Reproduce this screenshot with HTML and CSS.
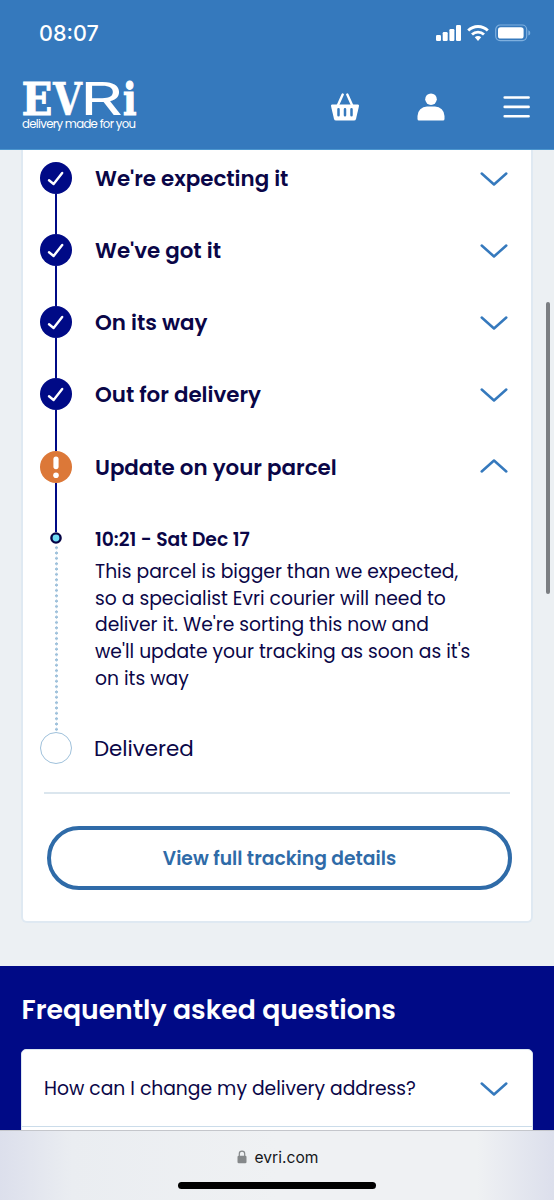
FILE: index.html
```html
<!DOCTYPE html>
<html lang="en">
<head>
<meta charset="utf-8">
<title>Evri tracking</title>
<link rel="stylesheet" href="styles.css">
</head>
<body>
<svg class="defs" width="0" height="0">
  <symbol id="chevron" viewBox="0 0 28 14"><path d="M1.7 1.500 14 12.500 26.300 1.500" fill="none" stroke="#3579bd" stroke-width="2.500" stroke-linecap="round" stroke-linejoin="round"/></symbol>
  <symbol id="check" viewBox="0 0 32 32"><circle cx="16" cy="16" r="16" fill="#000a86"/><path d="M9 18.300 13.600 22 22.200 11" fill="none" stroke="#fff" stroke-width="2.400" stroke-linecap="round" stroke-linejoin="round"/></symbol>
</svg>
<div class="screen">
  <header class="header">
    <div class="status">
      <span class="time">08:07</span>
      <svg class="status-icons" width="96" height="18" viewBox="0 0 96 18" fill="#fff">
        <rect x="0" y="11" width="5" height="6" rx="1.2"/><rect x="6.700" y="8" width="5" height="9" rx="1.2"/><rect x="13.400" y="5" width="5" height="12" rx="1.2"/><rect x="20" y="1" width="5" height="16" rx="1.2"/>
        <g fill="none" stroke="#fff" stroke-width="2.800"><path d="M32.200 6.600a13.800 13.800 0 0 1 19.600 0"/><path d="M36 10.600a8.600 8.600 0 0 1 12 0"/></g>
        <path d="M38.800 13.200a4.600 4.600 0 0 1 6.400 0L42 16.900z"/>
        <rect x="59.700" y="1" width="31" height="15.600" rx="4.500" fill="none" stroke="#7fb0df" stroke-width="1.200"/>
        <rect x="62" y="3.200" width="25.600" height="11.400" rx="2.600"/>
        <path d="M92.300 6.300q2 .6 2 2.600t-2 2.600z" fill="#7fb0df"/>
      </svg>
    </div>
    <div class="nav">
      <svg class="logo" width="120" height="68" viewBox="0 0 120 68" fill="#fff">
        <text class="logo-serif" x="-.2" y="48" textLength="30.500" lengthAdjust="spacingAndGlyphs">E</text>
        <text class="logo-serif logo-v" x="31" y="48" textLength="29" lengthAdjust="spacingAndGlyphs">V</text>
        <text class="logo-sans" x="58" y="48.300" textLength="43" lengthAdjust="spacingAndGlyphs">R</text>
        <text class="logo-serif" x="101" y="48" textLength="13.500" lengthAdjust="spacingAndGlyphs">i</text>
        <text class="logo-tag" x="0" y="60.500" textLength="114" lengthAdjust="spacing">delivery made for you</text>
      </svg>
      <svg class="basket" width="30" height="28" viewBox="0 0 30 28">
        <path d="M8 12 12.700 1.500M22 12 17.300 1.500" stroke="#fff" stroke-width="2.400" stroke-linecap="round"/>
        <path d="M2 11.500H28Q29.300 11.500 29 13L26 26Q25.600 27.500 24 27.500H6Q4.400 27.500 4 26L1 13Q.7 11.500 2 11.500Z" fill="#fff"/>
        <path d="M8.500 16.300V22.200M15 16.300V22.200M21.500 16.300V22.200" stroke="#3579bd" stroke-width="2.500" stroke-linecap="round"/>
      </svg>
      <svg class="person" width="28" height="28" viewBox="0 0 28 28" fill="#fff"><circle cx="14" cy="6.200" r="5.800"/><path d="M.5 26V23A9.500 9.500 0 0 1 10 13.500H18A9.500 9.500 0 0 1 27.500 23V26Q27.500 27.500 26 27.500H2Q.5 27.500.5 26Z"/></svg>
      <svg class="menu" width="28" height="24" viewBox="0 0 28 24"><path d="M1.700 2.500H25.600M1.700 11.900H25.600M1.700 21.300H25.600" stroke="#fff" stroke-width="2.600" stroke-linecap="round"/></svg>
    </div>
  </header>

  <main class="main">
    <section class="card">
      <div class="steps">
        <div class="step"><div class="rail"><svg class="mark"><use href="#check"/></svg><i class="line"></i></div><h2 class="title">We're expecting it</h2><svg class="chev"><use href="#chevron"/></svg></div>
        <div class="step"><div class="rail"><svg class="mark"><use href="#check"/></svg><i class="line"></i></div><h2 class="title">We've got it</h2><svg class="chev"><use href="#chevron"/></svg></div>
        <div class="step"><div class="rail"><svg class="mark"><use href="#check"/></svg><i class="line"></i></div><h2 class="title">On its way</h2><svg class="chev"><use href="#chevron"/></svg></div>
        <div class="step"><div class="rail"><svg class="mark"><use href="#check"/></svg><i class="line"></i></div><h2 class="title">Out for delivery</h2><svg class="chev"><use href="#chevron"/></svg></div>
        <div class="step step-alert"><div class="rail"><svg class="mark" viewBox="0 0 32 32"><circle cx="16" cy="16" r="16" fill="#dc7838"/><path d="M16 8.200V15.600" stroke="#fff" stroke-width="5.200" stroke-linecap="round"/><circle cx="16" cy="24.300" r="2.800" fill="#fff"/></svg><i class="line"></i></div><h2 class="title">Update on your parcel</h2><svg class="chev up"><use href="#chevron"/></svg></div>
        <div class="event">
          <div class="rail"><svg class="dot" viewBox="0 0 12 12"><circle cx="6" cy="6" r="4.600" fill="#6edcf5" stroke="#050345" stroke-width="2.400"/></svg><i class="dots"></i></div>
          <div class="event-body">
            <h3 class="when">10:21 - Sat Dec 17</h3>
            <p class="copy">This parcel is bigger than we expected,<br>so a specialist Evri courier will need to<br>deliver it. We're sorting this now and<br>we'll update your tracking as soon as it's<br>on its way</p>
          </div>
        </div>
        <div class="step step-last"><div class="rail"><i class="ring"></i></div><p class="title pending">Delivered</p></div>
      </div>
      <hr class="rule">
      <a class="button">View full tracking details</a>
    </section>
  </main>

  <section class="faq">
    <h2 class="faq-title">Frequently asked questions</h2>
    <div class="faq-card"><div class="question"><span>How can I change my delivery address?</span><svg class="chev"><use href="#chevron"/></svg></div></div>
  </section>

  <footer class="browser">
    <div class="address">
      <svg width="10" height="14" viewBox="0 0 10 14"><path d="M2.300 6.500V3.800a2.700 2.700 0 0 1 5.400 0V6.500" fill="none" stroke="#85888a" stroke-width="1.200"/><rect x=".5" y="5.800" width="9" height="7.400" rx="1.300" fill="#85888a"/></svg>
      <span class="host">evri.com</span>
    </div>
    <div class="home"></div>
  </footer>
  <div class="scroll"></div>
</div>
</body>
</html>
```
FILE: styles.css
```css
* { box-sizing: border-box; }
body { margin: 0; background: #ecf0f3; font-family: Poppins, Inter, sans-serif; color: #0a0647; }
h2, h3, p { margin: 0; }
.defs { display: block; }
.screen { position: relative; width: 554px; height: 1200px; overflow: hidden; display: flex; flex-direction: column; }
.header { height: 150px; flex: none; background: #3579bd; border-bottom: 1px solid #4c96cf; color: #fff; }
.status { height: 67px; padding: 0 22px 0 39px; display: flex; justify-content: space-between; align-items: center; }
.time { font-family: Inter, sans-serif; font-size: 21.500px; line-height: 26px; font-weight: 500; margin-top: -1px; }
.status-icons { width: 96px; margin-top: -1px; }
.nav { display: flex; height: 81px; padding-left: 22px; align-items: flex-start; }
.logo { overflow: visible; }
.logo-serif { font: bold 44px "DejaVu Serif", serif; stroke: #fff; stroke-width: 1.200px; }
.logo-v { stroke-width: .5px; }
.logo-sans { font: 400 45px Inter, sans-serif; }
.logo-tag { font: 400 11.700px Poppins, Inter, sans-serif; }
.basket { margin: 26px 0 0 188px; }
.person { margin: 26px 0 0 57px; }
.menu { margin: 28px 0 0 58px; }
.main { height: 816px; flex: none; padding: 0 21px; }
.card { height: 773px; padding: 11.500px 19px 0 17px; border: 2px solid #dfe9f2; border-top: 0; border-radius: 0 0 6px 6px; background: #fff; }
.step { display: flex; height: 72.250px; }
.rail { display: flex; flex-direction: column; align-items: center; width: 32px; margin-right: 23px; }
.mark { width: 32px; height: 32px; flex: none; }
.line { width: 2.600px; flex: 1; background: #000a86; }
.title { flex: 1; font-size: 21.400px; line-height: 33px; font-weight: 600; letter-spacing: -.02px; }
.chev { width: 28px; height: 14px; margin: 10px 4px 0 0; }
.up { transform: scaleY(-1); margin-top: 8px; }
.step-alert { height: 81.500px; }
.event { display: flex; height: 199.500px; }
.dot { width: 12px; height: 12px; flex: none; }
.dots { width: 3px; flex: 1; margin-top: 1px; background: radial-gradient(circle at center, #9fc1db 1.200px, transparent 1.700px) 0 0 / 3px 5.350px repeat-y; }
.event-body { margin-top: -6.500px; }
.when { font-size: 18.730px; line-height: 27px; font-weight: 600; }
.copy { margin-top: 6.300px; font-size: 18.730px; line-height: 26.800px; }
.step-last { height: 32px; }
.ring { width: 32px; height: 32px; border: 1px solid #9fc1db; border-radius: 50%; }
.pending { font-weight: 400; margin-left: -1px; }
.rule { width: 466px; height: 2px; margin: 28px 0 0 4px; border: 0; background: #dbe6ee; }
.button { display: flex; align-items: center; justify-content: center; width: 465px; height: 64px; margin: 32px 0 0 7px; padding-top: 1px; border: 4px solid #2f6ba8; border-radius: 32px; color: #2f6ba8; font-size: 18.730px; font-weight: 600; }
.faq { height: 164px; flex: none; padding: 0 21px; background: #000a86; overflow: hidden; }
.faq-title { padding: 22.500px 0 0 .5px; height: 83px; font-size: 26.700px; line-height: 41px; color: #fff; font-weight: 600; }
.faq-card { height: 100px; border: 1px solid #dbe6f0; border-radius: 5px; background: #fff; }
.question { display: flex; justify-content: space-between; height: 77px; padding: 0 22px; border-bottom: 1px solid #cbdcea; align-items: center; font-size: 18.730px; }
.question .chev { margin: 2px 2px 0 0; }
.browser { height: 70px; flex: none; border-top: 1px solid #c4c6cb; background: linear-gradient(90deg, #dcdfec, #eaedf1 13%, #eff1f3 50%, #eff1f3 86%, #dcdfec); }
.address { display: flex; justify-content: center; align-items: center; gap: 8px; height: 51px; padding: 1px 0 0 1px; font-family: Inter, sans-serif; font-size: 15.600px; color: #15171a; }
.home { width: 198px; height: 7px; margin: 0 auto; border-radius: 4px; background: #000; }
.scroll { position: absolute; left: 546px; top: 302px; width: 4px; height: 292px; border-radius: 2px; background: #7b7e82; }
```
